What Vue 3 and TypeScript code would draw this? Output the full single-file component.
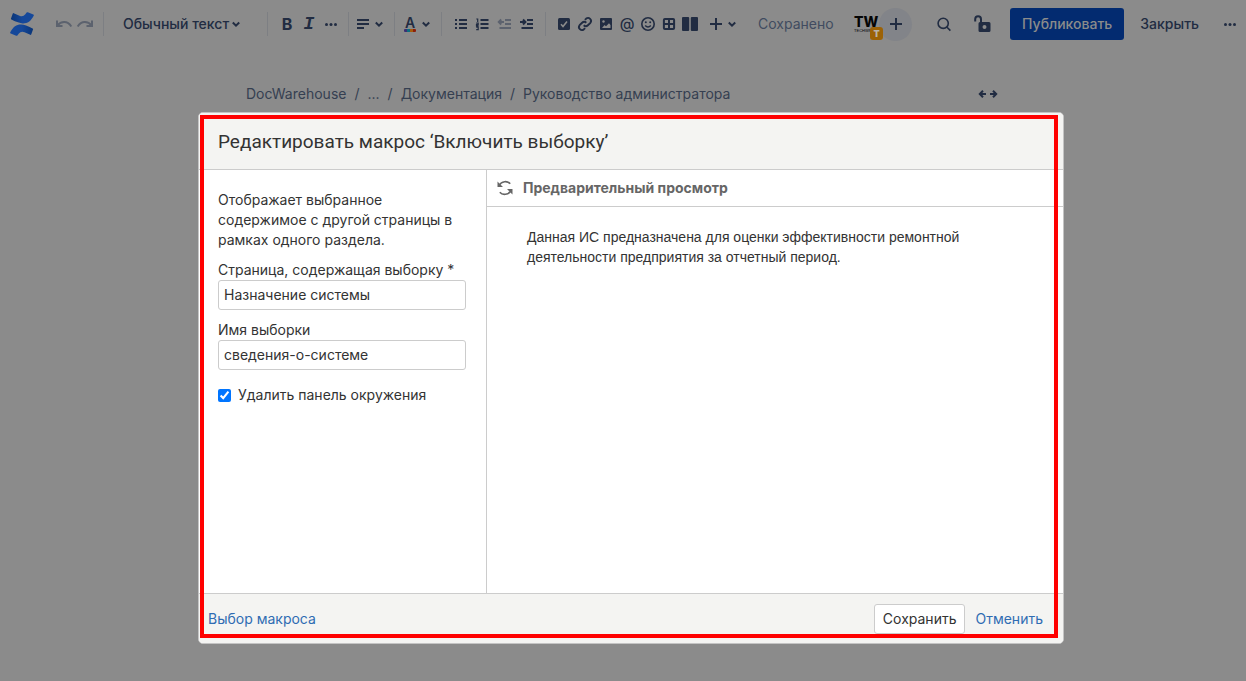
<script setup lang="ts">
import { ref } from 'vue'

const textStyle = ref('Обычный текст')
const page = ref('Назначение системы')
const excerpt = ref('сведения-о-системе')
const removePanel = ref(true)
const crumbs: string[] = ['DocWarehouse', '...', 'Документация', 'Руководство администратора']
</script>

<template>
  <div class="screen">
    <header class="bar">
      <a href="#" class="logo" aria-label="Confluence">
        <svg width="24" height="24" viewBox="0 0 24 24">
          <defs>
            <linearGradient id="wave" x1="0" y1="0" x2="1" y2="0"><stop offset="0" stop-color="#0a3577" /><stop offset=".5" stop-color="#15489a" /><stop offset="1" stop-color="#15489a" /></linearGradient>
          </defs>
          <path id="ribbon" d="M3.700 1.200 9.500 3.800Q13 5.300 15.300 2.300L16.600.600Q17.100 0 17.800.300L23.300 2.500Q24.200 2.900 23.700 3.700C20.500 9.500 17.500 11.600 12.500 11.400Q9 11.200 1.400 7.500Q.700 7.100 1 6.400L2.700 1.700Q3 .900 3.700 1.200Z" fill="url(#wave)" stroke="none" />
          <use href="#ribbon" transform="rotate(180 12 12)" />
        </svg>
      </a>
      <div class="group history">
        <button class="tool faded" aria-label="Отменить действие"><svg viewBox="0 0 20 20"><path d="M3 6.500v5.500h5.500M3.300 11.700C7 7 13.500 6.500 17.300 12.500" /></svg></button>
        <button class="tool faded" aria-label="Повторить действие"><svg viewBox="0 0 20 20"><path d="M17 6.500v5.500h-5.500M16.700 11.700C13 7 6.500 6.500 2.700 12.500" /></svg></button>
      </div>
      <i class="rule"></i>
      <label class="style-pick">
        <select v-model="textStyle" aria-label="Стиль текста"><option>Обычный текст</option></select>
        <svg class="chev" viewBox="0 0 12 20"><path d="m2.800 8.500 3.200 3.200 3.200-3.200" /></svg>
      </label>
      <i class="rule"></i>
      <div class="group marks">
        <button class="tool glyph bold">B</button>
        <button class="tool glyph italic">I</button>
        <button class="tool" aria-label="Ещё"><svg viewBox="0 0 20 20" class="solid"><circle cx="5.500" cy="10.500" r="1.500" /><circle cx="10" cy="10.500" r="1.500" /><circle cx="14.500" cy="10.500" r="1.500" /></svg></button>
      </div>
      <i class="rule"></i>
      <button class="drop" aria-label="Выравнивание">
        <svg class="pic" viewBox="0 0 20 20"><path d="M4 6h12M4 10h12M4 14h7" /></svg>
        <svg class="chev" viewBox="0 0 12 20"><path d="m2.800 8.500 3.200 3.200 3.200-3.200" /></svg>
      </button>
      <i class="rule"></i>
      <button class="drop color" aria-label="Цвет текста">
        <span class="letter">A<i class="rainbow"></i></span>
        <svg class="chev" viewBox="0 0 12 20"><path d="m2.800 8.500 3.200 3.200 3.200-3.200" /></svg>
      </button>
      <i class="rule"></i>
      <div class="group lists">
        <button class="tool" aria-label="Маркированный список"><svg viewBox="0 0 20 20"><path d="M8 6h8M8 10h8M8 14h8M4 6h2M4 10h2M4 14h2" /></svg></button>
        <button class="tool" aria-label="Нумерованный список"><svg viewBox="0 0 20 20"><path d="M7.500 6h8M7.500 10h8M7.500 14h8" /><path class="thin" d="M3.300 5h1.400v3M3.200 9.200h2v1.400H3.500v1.300h2M3.200 13.200h2v2.400h-2" /></svg></button>
        <button class="tool faded" aria-label="Уменьшить отступ"><svg viewBox="0 0 20 20"><path d="M10 6h6M10 10h6M4.500 14H16M4 8h5M6.200 5.500 3.800 8l2.400 2.500" /></svg></button>
        <button class="tool" aria-label="Увеличить отступ"><svg viewBox="0 0 20 20"><path d="M10 6h6M10 10h6M4.500 14H16M3 8h5.500M6 5.500 8.400 8 6 10.500" /></svg></button>
      </div>
      <i class="rule"></i>
      <div class="group insert">
        <button class="tool" aria-label="Задача"><svg viewBox="0 0 20 20"><rect x="4" y="4" width="12" height="12" rx="1.500" class="fill" /><path class="light" d="m7 10.300 2 2.200 4-5" /></svg></button>
        <button class="tool" aria-label="Ссылка"><svg viewBox="0 0 20 20"><path class="link" d="m8.700 11.300a3 3 0 0 0 4.200 0l2.500-2.500a3 3 0 0 0-4.200-4.200L9.900 5.900M11.300 8.700a3 3 0 0 0-4.200 0l-2.500 2.500a3 3 0 0 0 4.200 4.200l1.300-1.300" /></svg></button>
        <button class="tool" aria-label="Изображение"><svg viewBox="0 0 20 20"><rect x="4" y="4" width="12" height="12" rx="1" class="fill" /><circle cx="7.500" cy="7.500" r="1.200" class="hole" /><path class="hole" d="m6 14 2.500-3 1.500 1.200 3-3L14.500 11v3z" /></svg></button>
        <button class="tool glyph at">@</button>
        <button class="tool" aria-label="Эмодзи"><svg viewBox="0 0 20 20"><circle class="mid" cx="10" cy="10" r="6.200" /><circle class="fill" cx="7.800" cy="8.300" r="1" /><circle class="fill" cx="12.200" cy="8.300" r="1" /><path class="mid" d="M7.200 11.500Q10 14.500 12.800 11.500" /></svg></button>
        <button class="tool" aria-label="Таблица"><svg viewBox="0 0 20 20"><rect x="4.900" y="4.900" width="10.200" height="10.200" rx="1" /><path d="M10 5v10M5 10h10" /></svg></button>
        <button class="tool" aria-label="Макет"><svg viewBox="0 0 20 20"><rect x="2" y="3" width="7.200" height="14" rx="1" class="fill" /><rect x="10.800" y="3" width="7.200" height="14" rx="1" class="fill" /></svg></button>
      </div>
      <button class="drop plus" aria-label="Вставить">
        <svg class="pic" viewBox="0 0 20 20"><path d="M10 4v12M4 10h12" /></svg>
        <svg class="chev" viewBox="0 0 12 20"><path d="m2.800 8.500 3.200 3.200 3.200-3.200" /></svg>
      </button>
      <span class="saved">Сохранено</span>
      <div class="people">
        <span class="avatar">TW<small>TECHWR</small><b>T</b></span>
        <button class="invite" aria-label="Пригласить"><svg viewBox="0 0 20 20"><path d="M10 4v12M4 10h12" /></svg></button>
      </div>
      <button class="tool search" aria-label="Поиск"><svg viewBox="0 0 20 20"><circle class="mid" cx="9.200" cy="9.300" r="5.100" /><path class="mid" d="m13 13.200 3.400 3.400" /></svg></button>
      <button class="tool lock" aria-label="Ограничения"><svg viewBox="0 0 20 20"><path d="M3.200 7.500V5.200a2.900 2.900 0 0 1 5.800 0V9" /><path class="fill" fill-rule="evenodd" d="M8 8h9q1.500 0 1.500 1.500v7q0 1.500-1.500 1.500H8q-1.500 0-1.500-1.500v-7Q6.500 8 8 8Zm4.500 3a2 2 0 1 0 0 4 2 2 0 0 0 0-4Z" /></svg></button>
      <button class="publish">Публиковать</button>
      <button class="close">Закрыть</button>
      <button class="tool" aria-label="Другие действия"><svg viewBox="0 0 20 20" class="solid"><circle cx="5.500" cy="10.500" r="1.500" /><circle cx="10" cy="10.500" r="1.500" /><circle cx="14.500" cy="10.500" r="1.500" /></svg></button>
    </header>

    <nav class="crumbs" aria-label="Путь">
      <template v-for="(c, i) in crumbs" :key="c">
        <span v-if="i" class="slash">/</span>
        <a href="#">{{ c }}</a>
      </template>
      <button class="wide" aria-label="Ширина страницы"><svg viewBox="0 0 20 20"><path d="M2 10h6M5 6.800 1.800 10 5 13.200M12 10h6M15 6.800 18.200 10 15 13.200" /></svg></button>
    </nav>

    <div class="overlay">
      <section class="dialog" role="dialog" aria-labelledby="dialog-title">
        <header class="head"><h1 id="dialog-title">Редактировать макрос ‘Включить выборку’</h1></header>
        <div class="body">
          <form class="params" @submit.prevent>
            <p>Отображает выбранное содержимое с другой страницы в рамках одного раздела.</p>
            <label for="page">Страница, содержащая выборку *</label>
            <input id="page" v-model="page" type="text" />
            <label for="excerpt">Имя выборки</label>
            <input id="excerpt" v-model="excerpt" type="text" />
            <label class="check"><input v-model="removePanel" type="checkbox" />Удалить панель окружения</label>
          </form>
          <div class="preview">
            <div class="preview-head">
              <button aria-label="Обновить"><svg viewBox="0 0 16 16"><path d="M2.200 5.200C4.500 1 10.500.5 13.200 3.800M13.800 10.800C11.500 15 5.500 15.500 2.800 12.200" /><path class="tip" d="M.5 1.500V7H6ZM15.500 14.500V9H10Z" /></svg></button>
              <h2>Предварительный просмотр</h2>
            </div>
            <p>Данная ИС предназначена для оценки эффективности ремонтной деятельности предприятия за отчетный период.</p>
          </div>
        </div>
        <footer class="foot">
          <a href="#">Выбор макроса</a>
          <button class="save">Сохранить</button>
          <a href="#">Отменить</a>
        </footer>
        <div class="frame"></div>
      </section>
    </div>
  </div>
</template>

<style>
body { margin: 0; background: #8b8b8b; }
</style>

<style scoped>
* { box-sizing: border-box; }
.screen { position: relative; min-height: 100vh; background: #8b8b8b; color: #212c42; font: 14px/20px Inter, "Noto Sans", sans-serif; }
button { border: 0; padding: 0; background: none; color: inherit; font: inherit; cursor: pointer; }
a { color: inherit; text-decoration: none; }
svg { display: block; fill: none; stroke: currentColor; stroke-width: 2; }
svg .fill, .solid { fill: currentColor; stroke: none; }
svg .mid { stroke-width: 1.600; }
svg .link { stroke-width: 1.900; }
svg .thin { stroke-width: 1.200; }
svg .light { stroke: #8b8b8b; stroke-width: 1.600; }
svg .hole { fill: #8b8b8b; stroke: none; }
.bar { display: flex; align-items: center; height: 48px; padding: 0 6px 0 10px; font-weight: 500; white-space: nowrap; }
.bar > * { flex-shrink: 0; }
.logo { margin-right: 20px; }
.group { display: flex; gap: 2px; }
.history { gap: 1px; margin-right: 8px; }
.rule { width: 1px; height: 24px; background: #7d7f83; }
.tool, .tool svg { width: 20px; height: 20px; }
.faded { color: #5c626e; }
.chev { width: 12px; height: 20px; }
.style-pick { display: grid; align-items: center; width: 163px; padding: 0 16px 0 19px; }
.style-pick select { grid-area: 1 / 1; appearance: none; border: 0; padding: 0; background: none; color: inherit; font: inherit; width: 118px; }
.style-pick .chev { grid-area: 1 / 1; justify-self: end; margin-right: 9px; pointer-events: none; }
.marks { margin: 0 7px 0 9px; }
.glyph { text-align: center; font-size: 16px; }
.bold { font-weight: 700; }
.italic { font: italic bold 18px/20px "Liberation Mono", monospace; }
.at { font-size: 15px; font-weight: 500; }
.drop { display: flex; align-items: center; margin: 0 9px 0 4px; }
.pic { width: 20px; height: 20px; }
.color { margin: 0 9px 0 5px; }
.letter { display: grid; justify-items: center; width: 20px; font-size: 14px; line-height: 13px; font-weight: 600; }
.rainbow { width: 12px; height: 3px; border-radius: 1px; background: linear-gradient(90deg, #3c2f73 25%, #0b6d80 25% 50%, #a35a0c 50% 75%, #8c1f0c 75%); }
.lists { margin: 0 8px 0 9px; }
.insert { gap: 1px; margin-left: 8px; }
.plus { margin: 0 20px 0 6px; }
.saved { color: #414b60; font-weight: 400; }
.people { display: flex; align-items: center; margin: 0 22px 0 auto; }
.avatar { position: relative; width: 25px; color: #050505; font-size: 14px; line-height: 14px; font-weight: 800; }
.avatar small { display: block; width: 15px; font: 4px/4px "Liberation Sans", sans-serif; }
.avatar b { position: absolute; left: 16px; top: 12px; width: 13px; height: 13px; border-radius: 3px; background: #9c6206; color: #b8b2a8; font-size: 9px; line-height: 13px; text-align: center; z-index: 1; }
.invite { display: grid; place-items: center; width: 33px; height: 33px; border-radius: 50%; background: #828489; }
.invite svg { width: 20px; height: 20px; }
.search { margin-right: 18px; }
.lock { margin-right: 18px; }
.publish { height: 32px; padding: 0 12px; border-radius: 3px; background: #032b70; color: #8b8b8b; }
.close { margin: 0 21px 0 16px; }

.crumbs { display: flex; align-items: center; width: 754px; max-width: 100%; margin: 36px auto 0; padding-right: 2px; color: #353f51; }
.crumbs .slash { margin: 0 8px; }
.wide { margin-left: auto; color: #212c42; }
.wide svg { width: 20px; height: 20px; }

.overlay { position: absolute; inset: 0; display: flex; justify-content: center; padding: 112px 0 37px 16px; }
.dialog { position: relative; display: flex; flex-direction: column; width: 866px; max-width: 100%; border: 1px solid #c4c4c4; border-radius: 5px; overflow: hidden; background: #fff; color: #333; }
.head { padding: 18px 19px 17px; border-bottom: 1px solid #ccc; background: #f4f4f2; }
h1 { margin: 0; font: 400 19px/21px Roboto, Inter, sans-serif; }
.body { flex: 1; display: flex; }
.params { width: 288px; padding: 20px 20px 0 19px; border-right: 1px solid #ccc; }
.params p { margin: 0 0 10px; }
.params label { display: block; }
.params input[type="text"] { display: block; width: 100%; height: 30px; margin-bottom: 10px; padding: 0 5px 2px; border: 1px solid #ccc; border-radius: 3px; background: #fff; color: #333; font: inherit; }
.params .check { display: flex; align-items: center; margin-top: 15px; }
.check input { width: 13px; height: 13px; margin: 0 7px 0 0; accent-color: #0075ff; }
.preview { flex: 1; min-width: 0; }
.preview-head { display: flex; align-items: center; gap: 10px; height: 37px; padding-left: 10px; border-bottom: 1px solid #ccc; color: #666; }
.preview-head svg { width: 16px; height: 16px; stroke-width: 1.600; }
.preview-head .tip { fill: currentColor; stroke: none; }
h2 { margin: 0; font-size: 14px; line-height: 20px; font-weight: 700; }
.preview p { max-width: 490px; margin: 20px 0 0; padding-left: 40px; font-family: "Liberation Sans", Arial, sans-serif; }
.foot { display: flex; align-items: center; gap: 10px; height: 50px; padding: 0 20px 0 9px; border-top: 1px solid #ccc; background: #f4f4f2; }
.foot a { color: #2f6cb3; }
.save { height: 30px; margin-left: auto; padding: 0 8px; border: 1px solid #ccc; border-radius: 3px; background: #fff; color: #333; }
.frame { position: absolute; inset: 2px 5px 5px 1px; border: 4px solid #f00; pointer-events: none; }
</style>
